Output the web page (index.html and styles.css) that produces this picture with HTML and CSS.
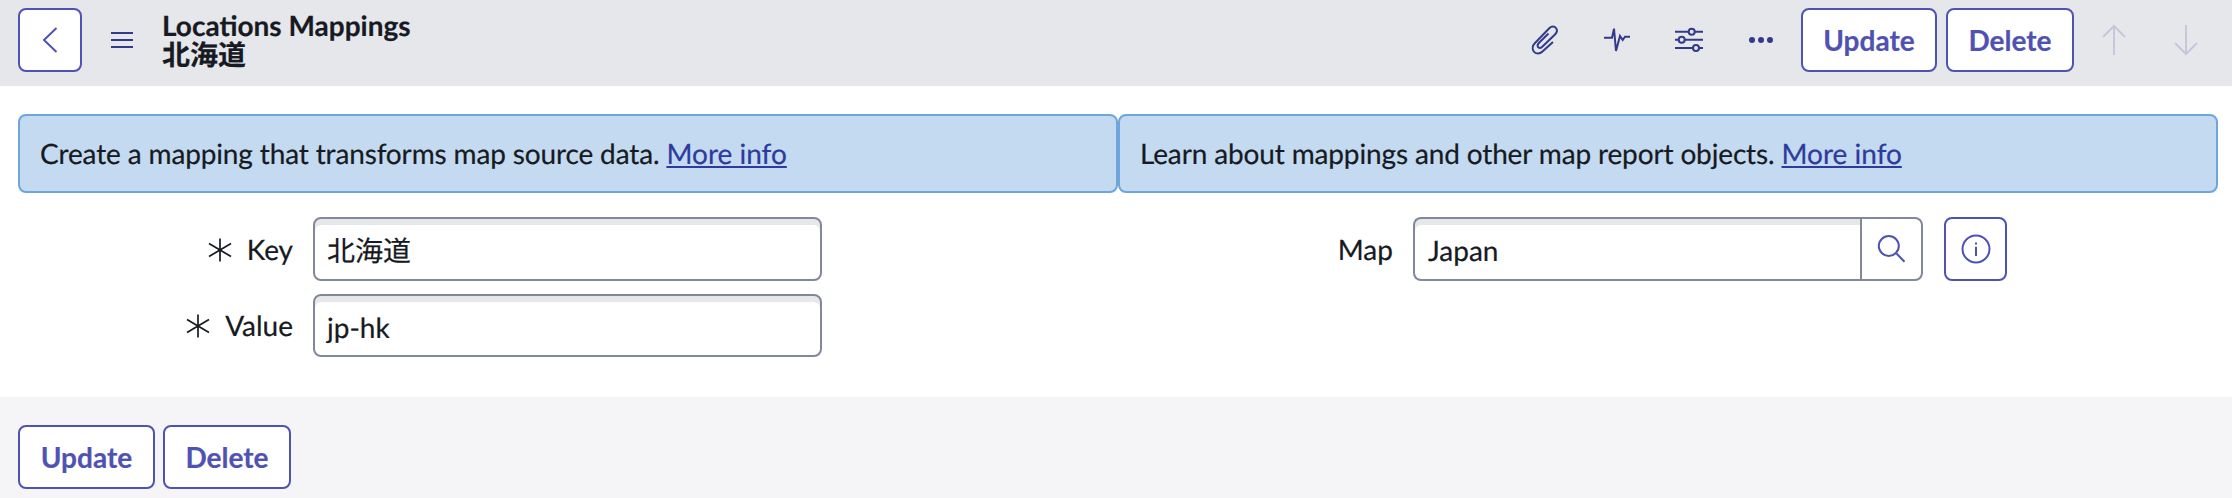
FILE: index.html
```html
<!DOCTYPE html>
<html lang="en">
<head>
<meta charset="utf-8">
<title>Locations Mappings</title>
<link rel="stylesheet" href="styles.css">
</head>
<body>
<header class="bar">
  <button class="btn square" aria-label="Back">
    <svg class="ic-back" viewBox="0 0 16 26"><path d="M14.500 1 2 13l12.500 12"/></svg>
  </button>
  <span class="menu" aria-label="Menu"><i></i><i></i><i></i></span>
  <h1 class="title">Locations Mappings<br>北海道</h1>
  <div class="tools">
    <svg class="tool" viewBox="0 0 32 32"><path d="M24 18 13.500 27.500C10.500 30.500 6.500 30 4.800 27.500 3 25 3.500 21.500 6 19L20.500 4C22.500 2 25.500 2 27 4 28.500 6 28 8.500 26 10.500L13 23C11.500 24.300 9.800 24.200 9 23 8.200 21.800 8.500 20.500 9.800 19L19.500 9.500"/></svg>
    <svg class="tool" viewBox="0 0 32 32"><path d="M3 13.700h8l2-9 2 22.300 4-15 2.700 4 2.300-3.300h5"/></svg>
    <svg class="tool sliders" viewBox="0 0 32 32"><path d="M2 7.700h28M2 15.700h28M2 24h28"/><circle cx="18.700" cy="7.700" r="3"/><circle cx="8.700" cy="15.700" r="3"/><circle cx="23" cy="24" r="3"/></svg>
    <svg class="tool dots" viewBox="0 0 32 32"><circle cx="7" cy="16" r="3"/><circle cx="16" cy="16" r="3"/><circle cx="25" cy="16" r="3"/></svg>
  </div>
  <button class="btn text top-update">Update</button>
  <button class="btn text top-delete">Delete</button>
  <svg class="arrow up" viewBox="0 0 26 32"><path d="M13 31V2M2 13 13 2l11 11"/></svg>
  <svg class="arrow down" viewBox="0 0 26 32"><path d="M13 1v29M2 19l11 11 11-11"/></svg>
</header>
<main class="main">
  <div class="alerts">
    <p class="alert">Create a mapping that transforms map source data. <a href="#">More info</a></p>
    <p class="alert">Learn about mappings and other map report objects. <a href="#">More info</a></p>
  </div>
  <div class="form">
    <div class="col">
      <div class="field">
        <label class="label"><svg class="req" viewBox="0 0 24 24"><path d="M12 .5v23M1 5.500l22 13M23 5.500l-22 13"/></svg>Key</label>
        <div class="input">北海道</div>
      </div>
      <div class="field">
        <label class="label"><svg class="req" viewBox="0 0 24 24"><path d="M12 .5v23M1 5.500l22 13M23 5.500l-22 13"/></svg>Value</label>
        <div class="input">jp-hk</div>
      </div>
    </div>
    <div class="col">
      <div class="field">
        <label class="label">Map</label>
        <div class="lookup">
          <div class="input joined">Japan</div>
          <span class="search"><svg viewBox="0 0 30 30"><circle cx="11.800" cy="12" r="10"/><path d="M19.500 19.500l8 8.200"/></svg></span>
          <button class="btn info" aria-label="Info"><svg viewBox="0 0 30 30"><circle cx="15" cy="15" r="13.500"/><path d="M15 12.700V22M15 8.500v2"/></svg></button>
        </div>
      </div>
    </div>
  </div>
</main>
<footer class="foot">
  <button class="btn text foot-update">Update</button>
  <button class="btn text foot-delete">Delete</button>
</footer>
</body>
</html>
```
FILE: styles.css
```css
* { box-sizing: border-box; }
html, body { margin: 0; padding: 0; }
body {
  width: 2232px;
  height: 498px;
  overflow: hidden;
  background: #fff;
  color: #171a22;
  font-family: Lato, "Noto Sans CJK JP", sans-serif;
  font-size: 28px;
  text-rendering: geometricPrecision;
  -webkit-text-stroke: 0.2px;
}
.bar {
  display: flex;
  align-items: center;
  height: 86px;
  padding: 0 18px 6px;
  background: #e6e7eb;
}
.btn {
  display: flex;
  align-items: center;
  justify-content: center;
  flex: none;
  height: 64px;
  padding: 0;
  background: #fff;
  border: 2px solid #4f52b2;
  border-radius: 8px;
  color: #4f52b2;
  font: inherit;
}
.btn.text { font-weight: 700; }
.square { width: 64px; }
.ic-back { width: 16px; height: 26px; }
.ic-back path { fill: none; stroke: #4f52b2; stroke-width: 2; }
.menu {
  display: flex;
  flex-direction: column;
  gap: 5px;
  width: 22px;
  margin-left: 29px;
}
.menu i { display: block; height: 2px; background: #333a8c; }
.title {
  margin: 0 0 0 29px;
  font-size: 28px;
  font-weight: 700;
  line-height: 29px;
}
.tools {
  display: flex;
  align-items: center;
  gap: 40px;
  margin-left: auto;
  margin-right: 24px;
}
.tool { width: 32px; height: 32px; display: block; }
.tool path, .tool circle { fill: none; stroke: #333a8c; stroke-width: 2; }
.tool.sliders circle { fill: #e6e7eb; }
.tool.dots circle { fill: #333a8c; stroke: none; }
.top-update { width: 136px; }
.top-delete { width: 128px; margin-left: 9px; }
.arrow { width: 26px; height: 32px; fill: none; stroke: #c6c7da; stroke-width: 2; }
.arrow.up { margin-left: 27px; }
.arrow.down { margin-left: 46px; margin-right: 15px; }
.main { padding: 28px 14px 40px 18px; height: 311px; }
.alerts { display: flex; }
.alert {
  flex: 0 0 1100px;
  height: 79px;
  margin: 0;
  padding: 0 20px 2px;
  display: flex;
  align-items: center;
  white-space: pre;
  letter-spacing: -0.14px;
  background: #c3daf0;
  border: 2px solid #6ea6db;
  border-radius: 8px;
}
.alert a { color: #2e3a9e; letter-spacing: 0; text-decoration: underline; }
.form { display: flex; margin-top: 24px; }
.col { display: flex; flex-direction: column; gap: 13px; width: 1100px; }
.field { display: flex; align-items: center; gap: 20px; }
.label {
  display: flex;
  align-items: center;
  justify-content: flex-end;
  gap: 15px;
  width: 275px;
}
.req { width: 24px; height: 24px; margin-top: 2px; fill: none; stroke: #171a22; stroke-width: 1.7; }
.input {
  width: 509px;
  height: 63.500px;
  padding: 3px 12px 0;
  display: flex;
  align-items: center;
  background: #fff;
  border: 2px solid #82879a;
  border-radius: 8px;
  box-shadow: inset 0 6px 0 #e6e7e8;
}
.lookup { display: flex; align-items: stretch; }
.input.joined { width: 447px; padding-left: 13px; border-radius: 8px 0 0 8px; border-right: 0; }
.search {
  display: flex;
  align-items: center;
  justify-content: center;
  width: 63px;
  border: 2px solid #82879a;
  border-radius: 0 8px 8px 0;
}
.search svg, .info svg { width: 30px; height: 30px; fill: none; stroke: #4f52b2; stroke-width: 2; }
.info { width: 63px; height: 63.500px; margin-left: 21px; }
.foot {
  display: flex;
  gap: 8px;
  height: 101px;
  padding: 28px 18px 0;
  background: #f5f5f8;
}
.foot-update { width: 137px; }
.foot-delete { width: 128px; }
```
